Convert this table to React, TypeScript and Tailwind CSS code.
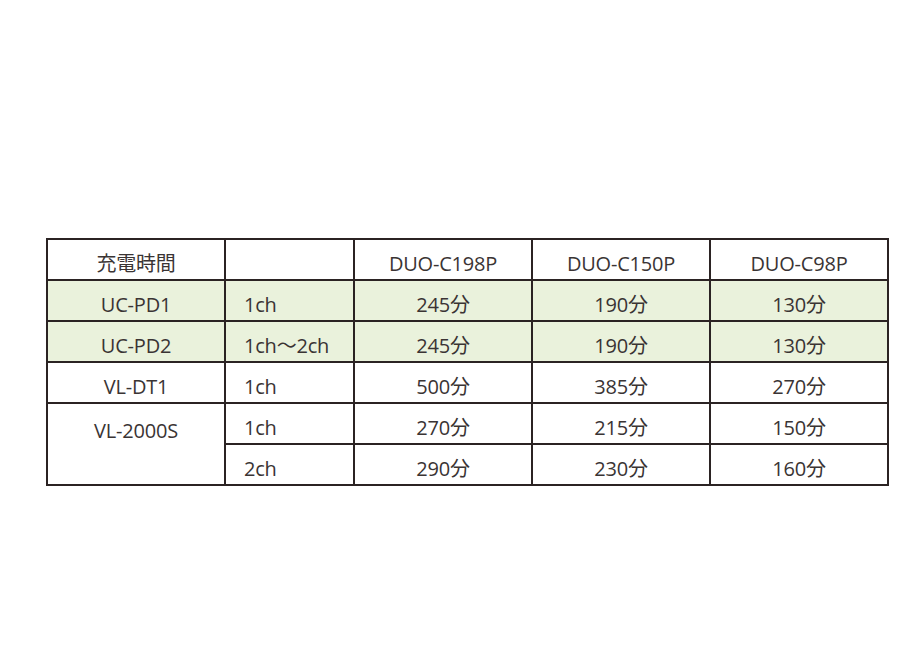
import * as React from "react";

const cols = ["DUO-C198P", "DUO-C150P", "DUO-C98P"];

type Row = { model?: string; span?: number; ch: string; values: string[]; green?: boolean };

const rows: Row[] = [
  { model: "UC-PD1", ch: "1ch", values: ["245分", "190分", "130分"], green: true },
  { model: "UC-PD2", ch: "1ch～2ch", values: ["245分", "190分", "130分"], green: true },
  { model: "VL-DT1", ch: "1ch", values: ["500分", "385分", "270分"] },
  { model: "VL-2000S", span: 2, ch: "1ch", values: ["270分", "215分", "150分"] },
  { ch: "2ch", values: ["290分", "230分", "160分"] },
];

const cell = "border-2 border-[#2b2323] h-[41px] pt-[8px] leading-none";

export default function App() {
  return (
    <div
      className="w-[924px] h-[660px] bg-white pt-[238px] pl-[46px] text-[#3a3434] text-[20px] tracking-[-0.2px]"
      style={{ fontFamily: '"Open Sans", "Noto Sans CJK JP", sans-serif' }}
    >
      <table className="border-collapse table-fixed w-[841px]">
        <colgroup>
          <col className="w-[178px]" />
          <col className="w-[129px]" />
          <col className="w-[178px]" />
          <col className="w-[178px]" />
          <col className="w-[178px]" />
        </colgroup>
        <tbody>
          <tr>
            <td className={`${cell} text-center`}>充電時間</td>
            <td className={cell}></td>
            {cols.map((c) => (
              <td key={c} className={`${cell} text-center`}>
                {c}
              </td>
            ))}
          </tr>
          {rows.map((r, i) => (
            <tr key={i} className={r.green ? "bg-[#eaf2dc]" : ""}>
              {r.model !== undefined && (
                <td
                  rowSpan={r.span ?? 1}
                  className={`${cell} text-center ${r.span ? "align-top pt-[17px]" : ""}`}
                >
                  {r.model}
                </td>
              )}
              <td className={`${cell} pl-[18px] text-left`}>{r.ch}</td>
              {r.values.map((v, j) => (
                <td key={j} className={`${cell} text-center`}>
                  {v}
                </td>
              ))}
            </tr>
          ))}
        </tbody>
      </table>
    </div>
  );
}
